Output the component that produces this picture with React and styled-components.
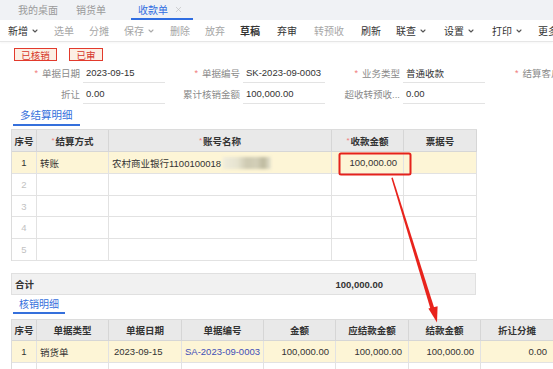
import React from "react";
import styled, { createGlobalStyle } from "styled-components";
import { ChevronDown, X } from "lucide-react";

const Global = createGlobalStyle`
  html, body { margin: 0; padding: 0; background: #fff; }
  * { box-sizing: border-box; }
`;

const FONT = '"Liberation Sans", "Noto Sans CJK SC", sans-serif';

const Page = styled.div`
  position: relative;
  width: 553px;
  height: 369px;
  overflow: hidden;
  background: #fff;
  font-family: ${FONT};
  font-size: 9.5px;
  color: #333;
`;

const TabBar = styled.div`
  display: flex;
  align-items: stretch;
  height: 20px;
  background: #f0f2f5;
  padding-left: 9px;
`;

const Tab = styled.div`
  display: flex;
  align-items: center;
  gap: 6px;
  padding: ${(p) => (p.$active ? "0 10px 0 7px" : "0 9px")};
  margin-left: ${(p) => (p.$active ? "16px" : "0")};
  color: ${(p) => (p.$active ? "#2f6de1" : "#9a9a9a")};
  border-bottom: 2px solid ${(p) => (p.$active ? "#2f6de1" : "transparent")};
  font-size: 10px;
  white-space: nowrap;
`;

const Toolbar = styled.div`
  display: flex;
  align-items: center;
  height: 22px;
  padding-left: 0.5px;
  border-bottom: 1px solid #e6e6e6;
  box-shadow: 0 1px 2px rgba(0, 0, 0, 0.04);
  white-space: nowrap;
`;

const ToolItem = styled.div`
  display: flex;
  align-items: center;
  gap: 3px;
  padding: 0 7.5px;
  font-size: 10px;
  color: ${(p) => (p.$disabled ? "#a6a6a6" : "#333")};
  font-weight: ${(p) => (p.$strong ? 600 : 400)};
`;

const ToolSep = styled.div`
  width: 1px;
  height: 11px;
  margin: 0 1px;
  background: #e1e1e1;
`;

const StampRow = styled.div`
  display: flex;
  gap: 12px;
  padding: 6px 0 0 14px;
`;

const Stamp = styled.div`
  display: flex;
  align-items: center;
  justify-content: center;
  width: ${(p) => p.$w}px;
  height: 13px;
  border: 1.5px solid #e23a2c;
  background: #fcefe4;
  color: #d6362a;
  font-size: 9.5px;
`;

const Form = styled.div`
  display: grid;
  grid-template-columns: 80px 82px 78px 82px 78px 82px 78px 82px;
  grid-auto-rows: 20px;
  row-gap: 1px;
  margin-top: 2px;
  padding-left: 3px;
`;

const Label = styled.div`
  display: flex;
  align-items: center;
  justify-content: ${(p) => (p.$start ? "flex-start" : "flex-end")};
  padding: 0 3px 0 ${(p) => (p.$start ? "30px" : "0")};
  color: #8a8a8a;
  white-space: nowrap;
  overflow: hidden;
`;

const Req = styled.span`
  color: #f07a7a;
  margin-right: 4px;
  font-size: 9px;
`;

const Field = styled.div`
  display: flex;
  align-items: center;
  padding-left: 3px;
  border-bottom: 1px solid #e3e3e3;
  color: #333;
  white-space: nowrap;
`;

const SectionBar = styled.div`
  display: flex;
  height: ${(p) => p.$h}px;
  margin-bottom: ${(p) => p.$mb}px;
  padding-left: 13px;
`;

const SectionTab = styled.div`
  display: flex;
  align-items: center;
  padding: 0 ${(p) => p.$pad}px;
  color: #3570dc;
  font-size: ${(p) => p.$fs}px;
  border-bottom: 2px solid #3570dc;
`;

const Grid = styled.div`
  margin-left: 11px;
  width: ${(p) => p.$w}px;
  border-left: 1px solid #dcdcdc;
  border-top: 1px solid #dcdcdc;
`;

const Row = styled.div`
  display: grid;
  grid-template-columns: ${(p) => p.$cols};
  height: ${(p) => p.$h}px;
  background: ${(p) => p.$bg || "#fff"};
`;

const HeadCell = styled.div`
  display: flex;
  align-items: center;
  justify-content: center;
  border-right: 1px solid #d6d6d6;
  border-bottom: 1px solid #d6d6d6;
  background: #e9e9e9;
  font-weight: 700;
  color: #333;
  white-space: nowrap;
`;

const HeadReq = styled.span`
  color: #f07a7a;
  font-weight: 400;
  font-size: 8px;
  margin-right: 1px;
  align-self: flex-start;
  margin-top: 6px;
`;

const Cell = styled.div`
  display: flex;
  align-items: center;
  justify-content: ${(p) =>
    p.$align === "center" ? "center" : p.$align === "right" ? "flex-end" : "flex-start"};
  padding: 0 ${(p) => (p.$align === "right" ? "6px" : "0")} 0
    ${(p) => (p.$align === "left" ? `${p.$pl || 3}px` : "0")};
  border-right: 1px solid #e2e2e2;
  border-bottom: 1px solid #e2e2e2;
  color: ${(p) => (p.$muted ? "#c2c2c2" : p.$link ? "#3f4fb6" : "#333")};
  white-space: nowrap;
  overflow: hidden;
`;

const Blur = styled.span`
  display: inline-block;
  width: 48px;
  height: 12px;
  margin-left: 2px;
  background: linear-gradient(
    90deg,
    #efecdc 0%,
    #e6e3cf 30%,
    #cdc9b1 50%,
    #d3cfb8 70%,
    #bdb99e 85%,
    #e9e6d3 100%
  );
  filter: blur(1.5px);
`;

const SumBar = styled.div`
  display: grid;
  grid-template-columns: 220px 152px 93px;
  align-items: center;
  margin: 12px 0 0 11px;
  width: 465px;
  height: 22px;
  background: #f1f1f1;
  border: 1px solid #e0e0e0;
  font-weight: 700;
`;

const SumLabel = styled.div`
  padding-left: 3px;
`;

const SumValue = styled.div`
  text-align: right;
  padding-right: 1px;
`;

const Overlay = styled.svg`
  position: absolute;
  left: 0;
  top: 0;
  pointer-events: none;
`;

const cols1 = "25px 72px 223px 72px 73px";
const cols2 = "25px 72px 73px 82px 72px 73px 72px 73px 80px";

function Chev({ muted }) {
  return <ChevronDown size={8} strokeWidth={3.2} color={muted ? "#aaa" : "#555"} />;
}

export default function App() {
  const emptyRows = [2, 3, 4, 5];
  const blankCells = Array.from({ length: 9 }, (_, i) => i);
  return (
    <Page>
      <Global />
      <TabBar>
        <Tab>我的桌面</Tab>
        <Tab>销货单</Tab>
        <Tab $active>
          收款单
          <X size={9} strokeWidth={1.5} color="#b5b5b5" />
        </Tab>
      </TabBar>

      <Toolbar>
        <ToolItem>新增<Chev /></ToolItem>
        <ToolItem $disabled>选单</ToolItem>
        <ToolItem $disabled>分摊</ToolItem>
        <ToolItem $disabled>保存<Chev muted /></ToolItem>
        <ToolItem $disabled>删除</ToolItem>
        <ToolItem $disabled>放弃</ToolItem>
        <ToolItem $strong>草稿</ToolItem>
        <ToolSep />
        <ToolItem>弃审</ToolItem>
        <ToolSep />
        <ToolItem $disabled>转预收</ToolItem>
        <ToolSep />
        <ToolItem>刷新</ToolItem>
        <ToolItem>联查<Chev /></ToolItem>
        <ToolSep />
        <ToolItem>设置<Chev /></ToolItem>
        <ToolSep />
        <ToolItem>打印<Chev /></ToolItem>
        <ToolItem>更多</ToolItem>
      </Toolbar>

      <StampRow>
        <Stamp $w={43}>已核销</Stamp>
        <Stamp $w={34}>已审</Stamp>
      </StampRow>

      <Form>
        <Label><Req>*</Req>单据日期</Label>
        <Field>2023-09-15</Field>
        <Label><Req>*</Req>单据编号</Label>
        <Field>SK-2023-09-0003</Field>
        <Label><Req>*</Req>业务类型</Label>
        <Field>普通收款</Field>
        <Label $start><Req>*</Req>结算客户</Label>
        <div />
        <Label>折让</Label>
        <Field>0.00</Field>
        <Label>累计核销金额</Label>
        <Field>100,000.00</Field>
        <Label>超收转预收...</Label>
        <Field>0.00</Field>
      </Form>

      <SectionBar $h={22} $mb={3}>
        <SectionTab $pad={7} $fs={10.5}>多结算明细</SectionTab>
      </SectionBar>

      <Grid $w={466}>
        <Row $cols={cols1} $h={22}>
          <HeadCell>序号</HeadCell>
          <HeadCell><HeadReq>*</HeadReq>结算方式</HeadCell>
          <HeadCell><HeadReq>*</HeadReq>账号名称</HeadCell>
          <HeadCell><HeadReq>*</HeadReq>收款金额</HeadCell>
          <HeadCell>票据号</HeadCell>
        </Row>
        <Row $cols={cols1} $h={22} $bg="#fdf5d6">
          <Cell $align="center">1</Cell>
          <Cell $align="left">转账</Cell>
          <Cell $align="left">
            农村商业银行1100100018
            <Blur />
          </Cell>
          <Cell $align="right">100,000.00</Cell>
          <Cell />
        </Row>
        {emptyRows.map((n) => (
          <Row key={n} $cols={cols1} $h={n === 3 ? 21 : 22}>
            <Cell $align="center" $muted>{n}</Cell>
            <Cell />
            <Cell />
            <Cell />
            <Cell />
          </Row>
        ))}
      </Grid>

      <SumBar>
        <SumLabel>合计</SumLabel>
        <SumValue>100,000.00</SumValue>
        <div />
      </SumBar>

      <SectionBar $h={19} $mb={5}>
        <SectionTab $pad={6} $fs={10}>核销明细</SectionTab>
      </SectionBar>

      <Grid $w={620}>
        <Row $cols={cols2} $h={21}>
          <HeadCell>序号</HeadCell>
          <HeadCell>单据类型</HeadCell>
          <HeadCell>单据日期</HeadCell>
          <HeadCell>单据编号</HeadCell>
          <HeadCell>金额</HeadCell>
          <HeadCell>应结款金额</HeadCell>
          <HeadCell>结款金额</HeadCell>
          <HeadCell>折让分摊</HeadCell>
          <HeadCell />
        </Row>
        <Row $cols={cols2} $h={22} $bg="#fdf5d6">
          <Cell $align="center">1</Cell>
          <Cell $align="left">销货单</Cell>
          <Cell $align="left" $pl={5}>2023-09-15</Cell>
          <Cell $align="left" $link>SA-2023-09-0003</Cell>
          <Cell $align="right">100,000.00</Cell>
          <Cell $align="right">100,000.00</Cell>
          <Cell $align="right">100,000.00</Cell>
          <Cell $align="right">0.00</Cell>
          <Cell />
        </Row>
        <Row $cols={cols2} $h={22}>
          {blankCells.map((i) => (
            <Cell key={i} />
          ))}
        </Row>
      </Grid>

      <Overlay width="553" height="369" viewBox="0 0 553 369">
        <rect
          x="339.5"
          y="153.5"
          width="71"
          height="21"
          rx="1.5"
          fill="none"
          stroke="#e5221b"
          strokeWidth="2"
        />
        <polygon
          points="391.3,178 392.7,177.6 434.6,309 430.8,310"
          fill="#e8231c"
        />
        <polygon points="428.4,308.6 437.6,306.2 437,322.5" fill="#e8231c" />
      </Overlay>
    </Page>
  );
}
